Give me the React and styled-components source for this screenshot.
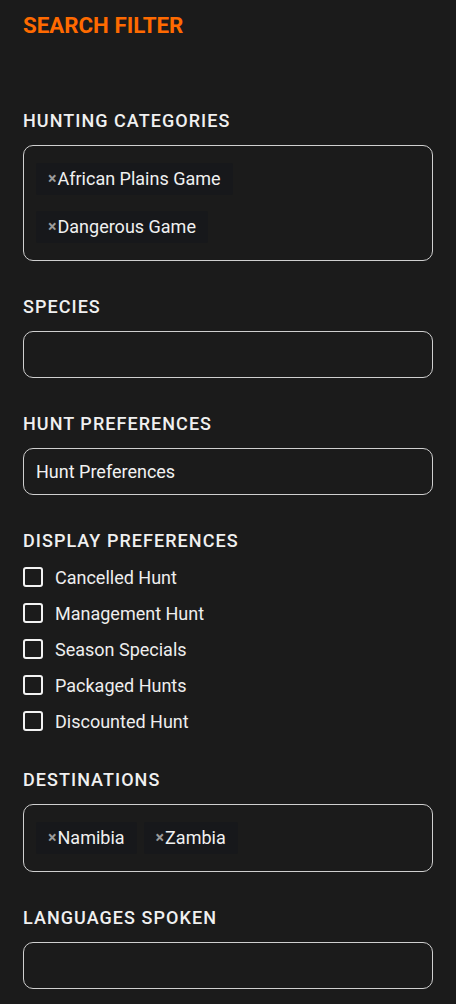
import React from "react";
import styled, { createGlobalStyle } from "styled-components";

const Global = createGlobalStyle`
  html, body { margin: 0; padding: 0; background: #1b1b1b; }
  body { font-family: Roboto, "Noto Sans", Arial, sans-serif; -webkit-font-smoothing: antialiased; }
  * { box-sizing: border-box; }
`;

const Page = styled.div`
  min-height: 1004px;
  background: #1b1b1b;
  padding: 12px 23px 0 23px;
  display: flex;
  flex-direction: column;
`;

const Title = styled.h1`
  margin: 0 0 73px 0;
  font-size: 22.3px;
  line-height: 26px;
  font-weight: 700;
  color: #ff6a00;
`;

const Sections = styled.div`
  display: flex;
  flex-direction: column;
  gap: 36px;
`;

const Section = styled.section`
  display: flex;
  flex-direction: column;
  gap: ${(p) => p.$gap || 14}px;
`;

const Label = styled.h2`
  margin: 0;
  font-size: 18px;
  line-height: 20px;
  font-weight: 500;
  letter-spacing: 1.05px;
  color: #f0f0f0;
  text-transform: uppercase;
`;

const Box = styled.div`
  border: 1px solid #cfcfcf;
  border-radius: 10px;
  min-height: 47px;
  padding: ${(p) => (p.$chips ? "17px 12px" : "0 12px")};
  display: flex;
  flex-direction: ${(p) => (p.$stacked ? "column" : "row")};
  align-items: ${(p) => (p.$stacked ? "flex-start" : "center")};
  flex-wrap: wrap;
  gap: 16px 7px;
`;

const Placeholder = styled.span`
  font-size: 18px;
  color: #f2f2f2;
  line-height: 20px;
`;

const Chip = styled.div`
  height: 32px;
  padding: 0 12px;
  background: #17181b;
  border-radius: 2px;
  display: inline-flex;
  align-items: center;
  gap: 1px;
  font-size: 18px;
  line-height: 20px;
  color: #f0f0f0;
`;

const Remove = styled.span`
  font-size: 16px;
  color: #9a9a9a;
  font-weight: 700;
  line-height: 1;
`;

const Checks = styled.div`
  display: flex;
  flex-direction: column;
  margin-bottom: -5px;
`;

const CheckRow = styled.label`
  display: flex;
  align-items: center;
  gap: 12px;
  height: 36px;
  font-size: 18px;
  color: #eeeeee;
`;

const CheckBox = styled.span`
  width: 20px;
  height: 20px;
  border: 2px solid #f2f2f2;
  border-radius: 3px;
  flex: none;
`;

const Tags = ({ items, stacked }) => (
  <Box $chips $stacked={stacked}>
    {items.map((t) => (
      <Chip key={t}>
        <Remove>×</Remove>
        {t}
      </Chip>
    ))}
  </Box>
);

const checks = [
  "Cancelled Hunt",
  "Management Hunt",
  "Season Specials",
  "Packaged Hunts",
  "Discounted Hunt",
];

export default function App() {
  return (
    <>
      <Global />
      <Page>
        <Title>SEARCH FILTER</Title>
        <Sections>
          <Section>
            <Label>Hunting Categories</Label>
            <Tags stacked items={["African Plains Game", "Dangerous Game"]} />
          </Section>
          <Section>
            <Label>Species</Label>
            <Box />
          </Section>
          <Section>
            <Label>Hunt Preferences</Label>
            <Box>
              <Placeholder>Hunt Preferences</Placeholder>
            </Box>
          </Section>
          <Section $gap={8}>
            <Label>Display Preferences</Label>
            <Checks>
              {checks.map((c) => (
                <CheckRow key={c}>
                  <CheckBox />
                  {c}
                </CheckRow>
              ))}
            </Checks>
          </Section>
          <Section>
            <Label>Destinations</Label>
            <Tags items={["Namibia", "Zambia"]} />
          </Section>
          <Section>
            <Label>Languages Spoken</Label>
            <Box />
          </Section>
        </Sections>
      </Page>
    </>
  );
}
